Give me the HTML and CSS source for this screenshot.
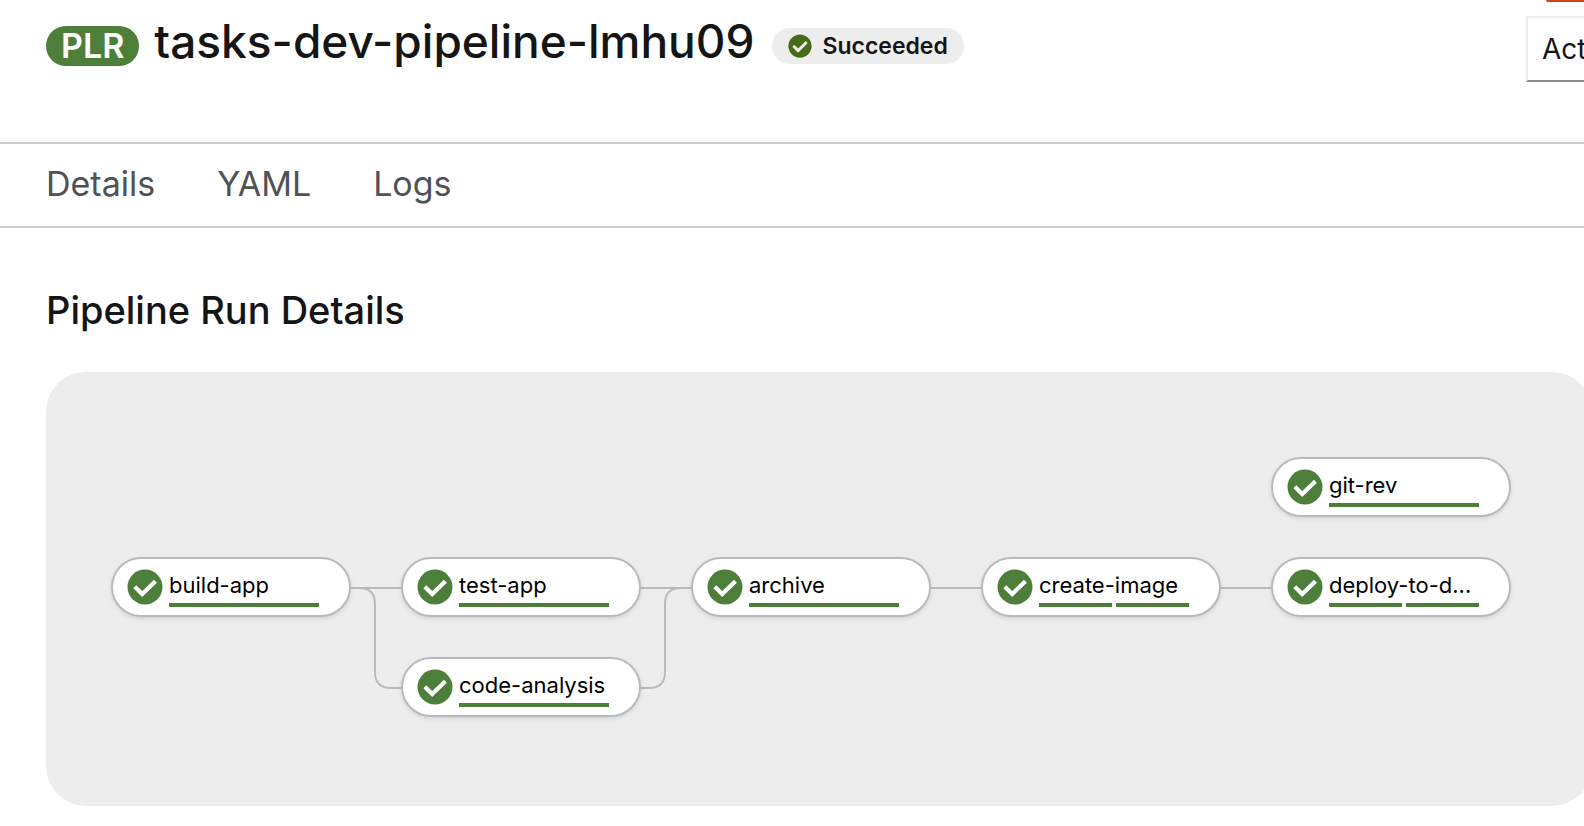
FILE: index.html
```html
<!DOCTYPE html>
<html lang="en">
<head>
<meta charset="utf-8">
<meta name="viewport" content="width=device-width, initial-scale=1">
<title>tasks-dev-pipeline-lmhu09</title>
<link rel="stylesheet" href="styles.css">
</head>
<body>
<svg class="defs" aria-hidden="true">
  <symbol id="check" viewBox="0 0 512 512">
    <path d="M504 256c0 136.967-111.033 248-248 248S8 392.967 8 256 119.033 8 256 8s248 111.033 248 248zM227.314 387.314l184-184c6.248-6.248 6.248-16.379 0-22.627l-22.627-22.627c-6.248-6.249-16.379-6.249-22.628 0L216 308.118l-70.059-70.059c-6.248-6.248-16.379-6.248-22.628 0l-22.627 22.627c-6.248 6.248-6.248 16.379 0 22.627l104 104c6.249 6.249 16.379 6.249 22.628.001z"/>
  </symbol>
  <symbol id="node-check" viewBox="0 0 36 36">
    <circle cx="18" cy="18" r="17.5"/>
    <path d="M7.8 17.8 15.2 25 28.4 12.2" fill="none" stroke="#fff" stroke-width="4.2"/>
  </symbol>
</svg>

<header class="header">
  <div class="heading">
    <span class="badge">PLR</span>
    <h1 class="title">tasks-dev-pipeline-lmhu09</h1>
    <span class="status"><svg class="status-icon" aria-hidden="true"><use href="#check"/></svg>Succeeded</span>
  </div>
  <div class="side">
    <div class="accent"></div>
    <button class="actions" type="button">Actions</button>
  </div>
</header>

<nav class="tabs">
  <a href="#details">Details</a>
  <a href="#yaml">YAML</a>
  <a href="#logs">Logs</a>
</nav>

<main class="content" id="details">
  <h2 class="subtitle">Pipeline Run Details</h2>
  <section class="panel">
    <div class="graph">
      <svg class="edges" viewBox="0 0 1400 260" aria-hidden="true">
        <path d="M240 131H290M530 131H580M820 131H870M1110 131H1160"/>
        <path d="M240 131H248Q264 131 264 147V215Q264 231 280 231H290"/>
        <path d="M530 231H538Q554 231 554 215V147Q554 131 570 131H580"/>
      </svg>
      <div class="node col-5 row-1"><svg class="node-icon" aria-hidden="true"><use href="#node-check"/></svg><div class="task"><span>git-rev</span><div class="steps"><i></i></div></div></div>
      <div class="node col-1 row-2"><svg class="node-icon" aria-hidden="true"><use href="#node-check"/></svg><div class="task"><span>build-app</span><div class="steps"><i></i></div></div></div>
      <div class="node col-2 row-2"><svg class="node-icon" aria-hidden="true"><use href="#node-check"/></svg><div class="task"><span>test-app</span><div class="steps"><i></i></div></div></div>
      <div class="node col-3 row-2"><svg class="node-icon" aria-hidden="true"><use href="#node-check"/></svg><div class="task"><span>archive</span><div class="steps"><i></i></div></div></div>
      <div class="node col-4 row-2"><svg class="node-icon" aria-hidden="true"><use href="#node-check"/></svg><div class="task"><span>create-image</span><div class="steps"><i></i><i></i></div></div></div>
      <div class="node col-5 row-2"><svg class="node-icon" aria-hidden="true"><use href="#node-check"/></svg><div class="task"><span>deploy-to-d...</span><div class="steps"><i></i><i></i></div></div></div>
      <div class="node col-2 row-3"><svg class="node-icon" aria-hidden="true"><use href="#node-check"/></svg><div class="task"><span>code-analysis</span><div class="steps"><i></i></div></div></div>
    </div>
  </section>
</main>
</body>
</html>
```
FILE: styles.css
```css
* { box-sizing: border-box; }

body {
  margin: 0;
  overflow-x: hidden;
  background: #fff;
  color: #151515;
  font-family: Inter, "Open Sans", sans-serif;
}

.defs { display: none; }

.header {
  display: flex;
  justify-content: space-between;
  align-items: flex-start;
  height: 142px;
  padding-left: 46px;
}

.heading {
  display: flex;
  align-items: center;
  padding-top: 13px;
}

.badge {
  height: 40px;
  margin-top: 10px;
  padding: 0 15px;
  border-radius: 20px;
  background: #4d7f3a;
  color: #fff;
  font-size: 34px;
  font-weight: 600;
  line-height: 40px;
}

.title {
  margin: 0 18px 0 15px;
  font-size: 46px;
  font-weight: 500;
  line-height: 56px;
  white-space: nowrap;
}

.status {
  display: flex;
  align-items: center;
  gap: 10px;
  height: 36px;
  margin-top: 10px;
  padding: 0 16px;
  border-radius: 18px;
  background: #ededed;
  font-size: 23px;
  font-weight: 600;
}

.status-icon {
  width: 24px;
  height: 24px;
  fill: #486b1b;
}

.side {
  flex: none;
  width: 58px;
}

.accent {
  height: 2px;
  margin-left: 20px;
  border-bottom-left-radius: 4px;
  background: #c9461c;
}

.actions {
  width: 200px;
  height: 66px;
  margin-top: 14px;
  padding: 0 14px;
  border: 2px solid #ededed;
  border-bottom-color: #8a8d90;
  background: #fff;
  color: #151515;
  font: 400 28px/60px Inter, "Open Sans", sans-serif;
  text-align: left;
}

.tabs {
  display: flex;
  gap: 62px;
  height: 86px;
  padding: 0 46px;
  border-top: 2px solid #ccc;
  border-bottom: 2px solid #ccc;
}

.tabs a {
  color: #4f5157;
  font-size: 34px;
  line-height: 80px;
  text-decoration: none;
}

.content { padding: 58px 0 20px 46px; }

.subtitle {
  margin: 0;
  font-size: 38px;
  font-weight: 500;
  line-height: 48px;
}

.panel {
  margin: 38px -8px 0 0;
  padding: 85px 65px 89px;
  border-radius: 40px;
  background: #ededed;
}

.graph {
  position: relative;
  display: grid;
  grid-template-columns: repeat(5, 240px);
  grid-template-rows: repeat(3, 60px);
  gap: 40px 50px;
}

.edges {
  position: absolute;
  top: 0;
  left: 0;
  width: 1400px;
  height: 260px;
  fill: none;
  stroke: #b8bbbe;
  stroke-width: 2;
}

.node {
  position: relative;
  display: flex;
  gap: 6px;
  padding: 10px 14px;
  border: 2px solid #b8bbbe;
  border-radius: 30px;
  background: #fff;
  box-shadow: 0 2px 4px rgba(3, 3, 3, 0.1);
  color: #000;
}

.node-icon {
  flex: none;
  width: 36px;
  height: 36px;
  fill: #4d7f3a;
}

.task {
  width: 150px;
  font-size: 22px;
  line-height: 32px;
  white-space: nowrap;
}

.steps {
  display: flex;
  gap: 4px;
  margin-top: 2px;
}

.steps i {
  flex: 1;
  height: 4px;
  background: #4d7f3a;
}

.col-1 { grid-column: 1; }
.col-2 { grid-column: 2; }
.col-3 { grid-column: 3; }
.col-4 { grid-column: 4; }
.col-5 { grid-column: 5; }
.row-1 { grid-row: 1; }
.row-2 { grid-row: 2; }
.row-3 { grid-row: 3; }
```
